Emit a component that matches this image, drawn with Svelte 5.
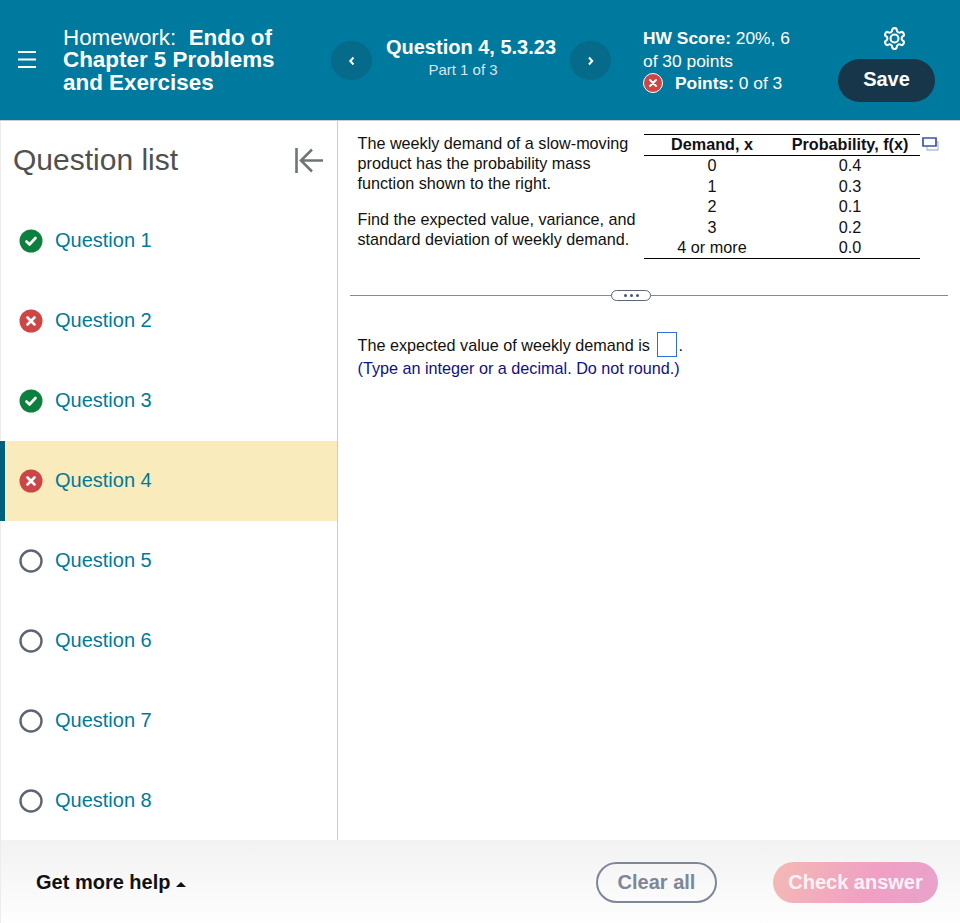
<script>
	const questions = [
		{ n: 1, status: 'correct' },
		{ n: 2, status: 'wrong' },
		{ n: 3, status: 'correct' },
		{ n: 4, status: 'wrong', active: true },
		{ n: 5, status: 'none' },
		{ n: 6, status: 'none' },
		{ n: 7, status: 'none' },
		{ n: 8, status: 'none' }
	];

	const rows = [
		['0', '0.4'],
		['1', '0.3'],
		['2', '0.1'],
		['3', '0.2'],
		['4 or more', '0.0']
	];
</script>

<div class="page">
	<header class="topbar">
		<button class="menu" aria-label="Menu">
			<svg width="18" height="17" viewBox="0 0 18 17" fill="none" stroke="#fff" stroke-width="1.800"><path d="M0 1h18M0 8.500h18M0 16h18" /></svg>
		</button>
		<h1 class="title">Homework:&nbsp; <b>Endo of Chapter 5 Problems and Exercises</b></h1>
		<nav class="qnav">
			<button class="round" aria-label="Previous question">
				<svg width="8" height="10" viewBox="0 0 8 10" fill="none" stroke="#fff" stroke-width="2"><path d="M5.500 1.500 2.300 5l3.200 3.500" /></svg>
			</button>
			<div class="qname">
				<div class="qnum">Question 4, 5.3.23</div>
				<div class="qpart">Part 1 of 3</div>
			</div>
			<button class="round" aria-label="Next question">
				<svg width="8" height="10" viewBox="0 0 8 10" fill="none" stroke="#fff" stroke-width="2"><path d="M2 1.500 5.200 5 2 8.500" /></svg>
			</button>
		</nav>
		<div class="score">
			<div><b>HW Score:</b> 20%, 6 of&nbsp;30&nbsp;points</div>
			<div class="points">
				<svg width="20" height="20" viewBox="0 0 20 20"><circle cx="10" cy="10" r="9.500" fill="#cd4545" stroke="#fff" stroke-width="1" /><path d="M7 7l6 6M13 7l-6 6" stroke="#fff" stroke-width="2" stroke-linecap="round" /></svg>
				<span><b>Points:</b> 0 of 3</span>
			</div>
		</div>
		<div class="actions">
			<svg class="gear" width="25" height="25" viewBox="0 0 24 24" fill="none" stroke="#fff" stroke-width="2" stroke-linecap="round" stroke-linejoin="round"><path d="M12.220 2h-.44a2 2 0 0 0-2 2v.18a2 2 0 0 1-1 1.730l-.43.25a2 2 0 0 1-2 0l-.15-.08a2 2 0 0 0-2.730.73l-.22.38a2 2 0 0 0 .73 2.730l.15.1a2 2 0 0 1 1 1.720v.51a2 2 0 0 1-1 1.740l-.15.09a2 2 0 0 0-.73 2.730l.22.38a2 2 0 0 0 2.730.73l.15-.08a2 2 0 0 1 2 0l.43.25a2 2 0 0 1 1 1.730V20a2 2 0 0 0 2 2h.44a2 2 0 0 0 2-2v-.18a2 2 0 0 1 1-1.730l.43-.25a2 2 0 0 1 2 0l.15.08a2 2 0 0 0 2.730-.73l.22-.39a2 2 0 0 0-.73-2.730l-.15-.08a2 2 0 0 1-1-1.740v-.5a2 2 0 0 1 1-1.740l.15-.09a2 2 0 0 0 .73-2.730l-.22-.38a2 2 0 0 0-2.730-.73l-.15.08a2 2 0 0 1-2 0l-.43-.25a2 2 0 0 1-1-1.730V4a2 2 0 0 0-2-2z" /><circle cx="12" cy="12" r="3.800" /></svg>
			<button class="save">Save</button>
		</div>
	</header>

	<div class="body">
		<aside class="sidebar">
			<div class="side-head">
				<h2>Question list</h2>
				<svg width="30" height="28" viewBox="0 0 30 28" fill="none" stroke="#6f7575" stroke-width="2.600"><path d="M2.500 1v25M29 13.500H7M18 2.500 7 13.500l11 11" /></svg>
			</div>
			<ul>
				{#each questions as q}
					<li class:active={q.active}>
						{#if q.status === 'correct'}
							<svg width="24" height="24" viewBox="0 0 24 24"><circle cx="12" cy="12" r="11.500" fill="#0d8040" /><path d="M7.500 12.500l3 3L16.500 9" fill="none" stroke="#fff" stroke-width="2.600" stroke-linecap="round" stroke-linejoin="round" /></svg>
						{:else if q.status === 'wrong'}
							<svg width="24" height="24" viewBox="0 0 24 24"><circle cx="12" cy="12" r="11.500" fill="#cd4545" /><path d="M8.500 8.500l7 7M15.500 8.500l-7 7" stroke="#fff" stroke-width="2.600" stroke-linecap="round" /></svg>
						{:else}
							<svg width="24" height="24" viewBox="0 0 24 24"><circle cx="12" cy="12" r="10.500" fill="none" stroke="#5b6676" stroke-width="2.400" /></svg>
						{/if}
						<span>Question {q.n}</span>
					</li>
				{/each}
			</ul>
		</aside>

		<main class="content">
			<section class="problem">
				<div class="prompt">
					<p>The weekly demand of a slow-moving product has the probability mass function shown to the right.</p>
					<p>Find the expected value, variance, and standard deviation of weekly demand.</p>
				</div>
				<table>
					<thead>
						<tr><th>Demand, x</th><th>Probability, f(x)</th></tr>
					</thead>
					<tbody>
						{#each rows as row}
							<tr><td>{row[0]}</td><td>{row[1]}</td></tr>
						{/each}
					</tbody>
				</table>
				<svg class="popout" width="17" height="14" viewBox="0 0 17 14" fill="none"><path d="M5 5h11v8H5z" stroke="#b6bde0" stroke-width="1.300" /><path d="M1 1h13v8H1z" fill="#fff" stroke="#3f51a8" stroke-width="1.700" /></svg>
			</section>

			<div class="divider">
				<span class="dots"><i></i><i></i><i></i></span>
			</div>

			<section class="answer">
				<p>The expected value of weekly demand is <span class="blank"></span>.</p>
				<p class="hint">(Type an integer or a decimal. Do not round.)</p>
			</section>
		</main>
	</div>

	<footer class="bottombar">
		<div class="help">Get more help <span class="caret"></span></div>
		<button class="clear">Clear all</button>
		<button class="check">Check answer</button>
	</footer>
</div>

<style>
	:global(body) {
		margin: 0;
		font-family: 'Liberation Sans', Arial, sans-serif;
	}

	button {
		font-family: inherit;
		border: none;
		padding: 0;
	}

	.page {
		height: 923px;
		display: flex;
		flex-direction: column;
		border-left: 1px solid #ececec;
		box-sizing: border-box;
	}

	.topbar {
		height: 120px;
		flex: none;
		background: #00799e;
		color: #fff;
		display: flex;
		align-items: flex-start;
		margin-left: -1px;
		border-bottom: 1px solid #c9ccd2;
		box-sizing: content-box;
	}

	.menu {
		background: none;
		margin: 51px 0 0 18px;
		width: 18px;
		height: 17px;
		line-height: 0;
	}

	.title {
		width: 245px;
		margin: 26.500px 0 0 27px;
		font-size: 22.400px;
		font-weight: 400;
		line-height: 22.500px;
	}

	.qnav {
		display: flex;
		align-items: center;
		margin: 41px 0 0 23px;
		height: 39px;
	}

	.round {
		width: 41px;
		height: 39px;
		border-radius: 50%;
		background: #066a8a;
		display: flex;
		align-items: center;
		justify-content: center;
	}

	.qname {
		width: 198px;
		text-align: center;
		margin-top: -6px;
	}

	.qnum {
		font-size: 20px;
		font-weight: 700;
		line-height: 24px;
	}

	.qpart {
		font-size: 15px;
		line-height: 22px;
		color: #d5e6ec;
		padding-right: 16px;
	}

	.score {
		width: 165px;
		margin: 27px 0 0 32px;
		font-size: 17.400px;
		line-height: 22.500px;
	}

	.points {
		display: flex;
		align-items: center;
		gap: 12px;
	}

	.actions {
		margin: 26px 0 0 30px;
		width: 97px;
		display: flex;
		flex-direction: column;
		align-items: center;
	}

	.gear {
		margin-left: 16px;
	}

	.save {
		margin-top: 8px;
		width: 97px;
		height: 43px;
		padding-bottom: 2px;
		border-radius: 22px;
		background: #17364a;
		color: #fff;
		font-size: 20px;
		font-weight: 700;
	}

	.body {
		flex: 1;
		display: flex;
		min-height: 0;
	}

	.sidebar {
		width: 336px;
		flex: none;
		border-right: 1px solid #c9ccd2;
	}

	.side-head {
		height: 80px;
		display: flex;
		align-items: center;
		justify-content: space-between;
		padding: 0 13px 0 12px;
	}

	.side-head h2 {
		margin: 0 0 2px;
		font-size: 30px;
		font-weight: 400;
		color: #505050;
	}

	ul {
		list-style: none;
		margin: 0;
		padding: 0;
	}

	li {
		height: 80px;
		display: flex;
		align-items: center;
		gap: 12px;
		padding-left: 18px;
		font-size: 20px;
		color: #007a9c;
		box-sizing: border-box;
	}

	li span {
		margin-bottom: 2px;
	}

	li.active {
		background: #f9ebbb;
		margin-left: -1px;
		border-left: 5px solid #00607c;
		padding-left: 14px;
	}

	.content {
		flex: 1;
		padding: 0 12px 0 12px;
		font-size: 16.200px;
		line-height: 20px;
		color: #111;
		min-width: 0;
	}

	p {
		margin: 0;
	}

	.problem {
		display: flex;
		align-items: flex-start;
		padding: 13px 0 0 8px;
		height: 174px;
		box-sizing: border-box;
	}

	.prompt {
		width: 286px;
		flex: none;
		margin: -1px 0 0 -0.500px;
		padding-right: 0.500px;
	}

	.prompt p + p {
		margin-top: 16px;
	}

	table {
		border-collapse: collapse;
		width: 276px;
		flex: none;
		border-top: 1px solid #000;
		border-bottom: 1px solid #000;
		text-align: center;
	}

	th {
		border-bottom: 1px solid #000;
	}

	th,
	td {
		padding: 0 0 2px;
		line-height: 18.400px;
	}

	th:first-child,
	td:first-child {
		width: 136px;
	}

	.popout {
		margin: 3px 0 0 2px;
		flex: none;
	}

	.divider {
		height: 1px;
		background: #7f8a9c;
		display: flex;
		justify-content: center;
		align-items: center;
		padding-right: 36px;
	}

	.dots {
		width: 38px;
		height: 9px;
		border: 1px solid #5b6676;
		border-radius: 6px;
		background: #fff;
		display: flex;
		align-items: center;
		justify-content: center;
		gap: 3px;
		flex: none;
	}

	.dots i {
		width: 3px;
		height: 3px;
		border-radius: 50%;
		background: #4a5568;
	}

	.answer {
		padding: 36px 0 0 7.500px;
	}

	.blank {
		display: inline-block;
		width: 18px;
		height: 23px;
		border: 1px solid #2f6fd6;
		vertical-align: -6px;
		margin-left: 3px;
		margin-right: 1px;
	}

	.hint {
		color: #10108a;
		margin-top: 1px;
	}

	.bottombar {
		flex: none;
		height: 83px;
		background: linear-gradient(180deg, #f2f2f2, #fefefe);
		display: flex;
		align-items: center;
		padding: 2px 22px 0 35px;
		box-sizing: border-box;
	}

	.help {
		font-size: 20px;
		font-weight: 700;
		color: #111;
		flex: 1;
		display: flex;
		align-items: center;
		gap: 6px;
	}

	.caret {
		width: 0;
		height: 0;
		border-left: 5px solid transparent;
		border-right: 5px solid transparent;
		border-bottom: 5px solid #111;
		margin-top: 3px;
	}

	.clear {
		width: 121px;
		height: 41px;
		border: 2px solid #7e8798;
		border-radius: 21px;
		background: transparent;
		color: #7e8798;
		font-size: 20px;
		font-weight: 700;
		box-sizing: border-box;
	}

	.check {
		margin-left: 56px;
		width: 165px;
		height: 41px;
		border-radius: 21px;
		background: linear-gradient(110deg, #f4bab4, #efa0c4 60%, #e8a2cc);
		color: #fdf3f6;
		font-size: 20px;
		font-weight: 700;
	}
</style>
